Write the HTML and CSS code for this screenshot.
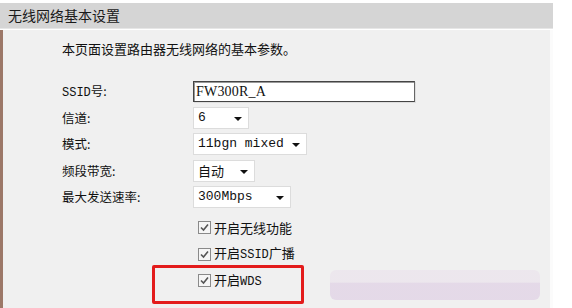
FILE: index.html
```html
<!DOCTYPE html>
<html lang="zh-CN">
<head>
<meta charset="utf-8">
<link rel="stylesheet" href="styles.css">
</head>
<body>
<div class="page">
  <div class="title">无线网络基本设置</div>
  <div class="panel">
    <p class="intro">本页面设置路由器无线网络的基本参数。</p>
    <div class="form">
      <div class="label"><span class="mono-s">SSID</span>号:</div>
      <div class="ctl"><span class="input">FW300R_A</span></div>
      <div class="label">信道:</div>
      <div class="ctl"><span class="select w-ch"><span class="val mono">6</span><span class="arrow"></span></span></div>
      <div class="label">模式:</div>
      <div class="ctl"><span class="select w-mode"><span class="val mono">11bgn mixed</span><span class="arrow"></span></span></div>
      <div class="label">频段带宽:</div>
      <div class="ctl"><span class="select w-bw"><span class="val">自动</span><span class="arrow"></span></span></div>
      <div class="label">最大发送速率:</div>
      <div class="ctl"><span class="select w-rate"><span class="val mono">300Mbps</span><span class="arrow"></span></span></div>
    </div>
    <div class="checks">
      <div class="check"><span class="box"><svg width="11" height="11" viewBox="0 0 11 11"><path d="M2 5.5 L4.5 8 L9 2.5" fill="none" stroke="#555" stroke-width="1.6"/></svg></span><span class="ctext">开启无线功能</span></div>
      <div class="check"><span class="box"><svg width="11" height="11" viewBox="0 0 11 11"><path d="M2 5.5 L4.5 8 L9 2.5" fill="none" stroke="#555" stroke-width="1.6"/></svg></span><span class="ctext">开启<span class="mono-s">SSID</span>广播</span></div>
      <div class="check"><span class="box"><svg width="11" height="11" viewBox="0 0 11 11"><path d="M2 5.5 L4.5 8 L9 2.5" fill="none" stroke="#555" stroke-width="1.6"/></svg></span><span class="ctext">开启<span class="mono-s">WDS</span></span></div>
      <div class="highlight"></div>
    </div>
    <div class="smudge"></div>
  </div>
</div>
</body>
</html>
```
FILE: styles.css
```css
html, body {
  margin: 0;
  padding: 0;
  background: #ffffff;
}
body {
  font-family: "Noto Sans CJK SC", "Noto Sans", sans-serif;
  color: #111;
  font-size: 13px;
}
.page {
  width: 553px;
  padding-top: 3px;
  height: 305px;
  overflow: hidden;
}
.title {
  height: 25px;
  line-height: 24px;
  background: #d5d5d5;
  padding-left: 8px;
  font-size: 14px;
  color: #1a1a1a;
  border-bottom: 1px solid #e6e6e6;
}
.panel {
  position: relative;
  margin-top: 1px;
  height: 280px;
  width: 547px;
  background: #f0f0f0;
  border-left: 3px solid #9c7868;
  border-right: 3px solid #fbfbfb;
}
.intro {
  margin: 0;
  padding: 10px 0 0 59px;
  height: 29px;
  line-height: 18px;
  font-size: 13px;
}
.form {
  display: grid;
  grid-template-columns: 131px auto;
  grid-auto-rows: 26.5px;
  padding-left: 59px;
  margin-top: 9px;
}
.label {
  line-height: 26px;
  font-size: 12.5px;
}
.ctl {
  display: flex;
  align-items: center;
}
.mono {
  font-family: "Liberation Mono", "DejaVu Sans Mono", monospace;
}
.mono-s {
  font-family: "Liberation Mono", "DejaVu Sans Mono", monospace;
  font-size: 12px;
}
.input {
  box-sizing: border-box;
  width: 222px;
  height: 21px;
  background: #fff;
  border: 1px solid #444;
  border-right-color: #666;
  box-shadow: inset 1px 1px 0 #999, 1px 1px 0 #ddd;
  font-family: "Liberation Serif", serif;
  font-size: 14px;
  line-height: 19px;
  padding-left: 2px;
  letter-spacing: 0.2px;
}
.select {
  box-sizing: border-box;
  height: 22px;
  background: #fff;
  border: 1px solid #dcdcdc;
  display: flex;
  align-items: center;
  justify-content: space-between;
  padding: 0 6px 0 4px;
}
.val {
  font-size: 13px;
  line-height: 20px;
}
.arrow {
  width: 0;
  height: 0;
  border-left: 4px solid transparent;
  border-right: 4px solid transparent;
  border-top: 4px solid #111;
  margin-top: 2px;
}
.w-ch { width: 56px; }
.w-mode { width: 114px; }
.w-bw { width: 62px; }
.w-rate { width: 98px; }
.checks {
  position: relative;
  margin-top: 4px;
  padding-left: 195px;
}
.check {
  height: 26.5px;
  display: flex;
  align-items: center;
  font-size: 13px;
}
.ctext {
  line-height: 18px;
}
.box {
  box-sizing: border-box;
  width: 13px;
  height: 13px;
  border: 1px solid #8a8a8a;
  background: #f6f6f6;
  margin-right: 3px;
  display: flex;
}
.box svg { display: block; }
.highlight {
  position: absolute;
  left: 149px;
  top: 50px;
  width: 146px;
  height: 33px;
  border: 3px solid #e31b1b;
  border-radius: 2px;
}
.smudge {
  position: absolute;
  left: 327px;
  top: 240px;
  width: 210px;
  height: 30px;
  background: linear-gradient(180deg, #ece6ed 0%, #ece6ed 40%, #e3d7e7 45%, #e3d7e7 100%);
  border-radius: 6px;
  opacity: 0.9;
}
```
